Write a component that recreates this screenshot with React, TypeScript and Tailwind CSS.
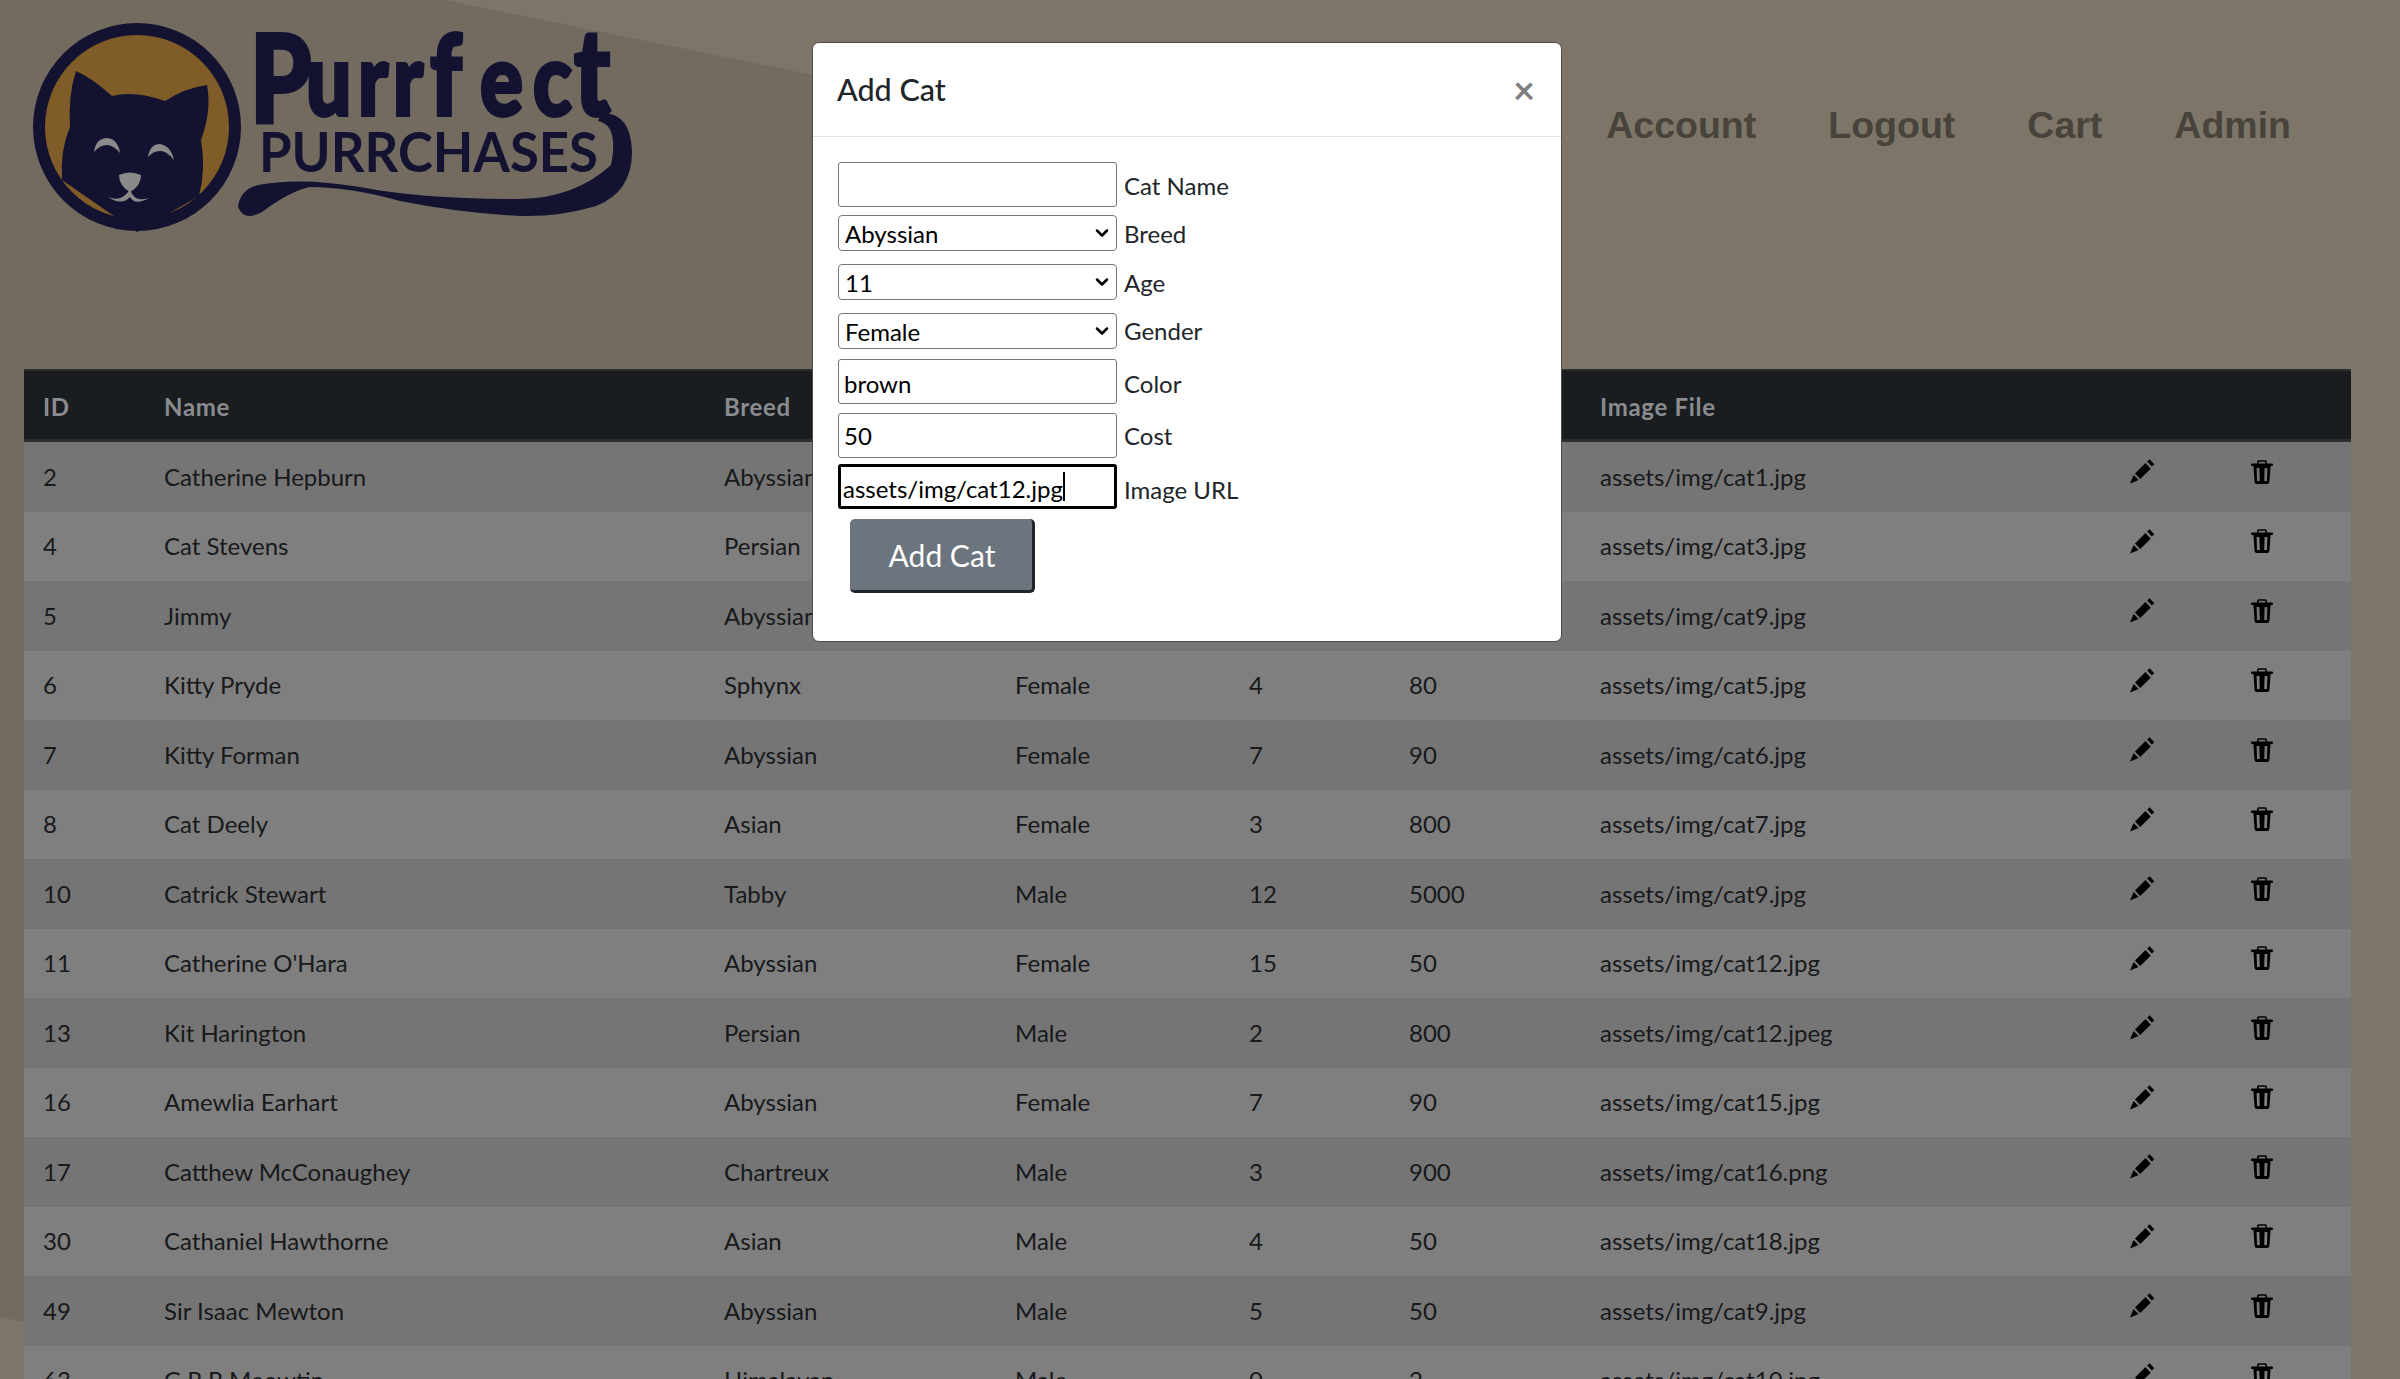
import { ChevronDown } from "lucide-react";

type Cat = {
  id: number;
  name: string;
  breed: string;
  gender: string;
  age: number;
  cost: number;
  image: string;
};

const CATS: Cat[] = [
  { id: 2, name: "Catherine Hepburn", breed: "Abyssian", gender: "Female", age: 5, cost: 50, image: "assets/img/cat1.jpg" },
  { id: 4, name: "Cat Stevens", breed: "Persian", gender: "Male", age: 9, cost: 100, image: "assets/img/cat3.jpg" },
  { id: 5, name: "Jimmy", breed: "Abyssian", gender: "Male", age: 2, cost: 40, image: "assets/img/cat9.jpg" },
  { id: 6, name: "Kitty Pryde", breed: "Sphynx", gender: "Female", age: 4, cost: 80, image: "assets/img/cat5.jpg" },
  { id: 7, name: "Kitty Forman", breed: "Abyssian", gender: "Female", age: 7, cost: 90, image: "assets/img/cat6.jpg" },
  { id: 8, name: "Cat Deely", breed: "Asian", gender: "Female", age: 3, cost: 800, image: "assets/img/cat7.jpg" },
  { id: 10, name: "Catrick Stewart", breed: "Tabby", gender: "Male", age: 12, cost: 5000, image: "assets/img/cat9.jpg" },
  { id: 11, name: "Catherine O'Hara", breed: "Abyssian", gender: "Female", age: 15, cost: 50, image: "assets/img/cat12.jpg" },
  { id: 13, name: "Kit Harington", breed: "Persian", gender: "Male", age: 2, cost: 800, image: "assets/img/cat12.jpeg" },
  { id: 16, name: "Amewlia Earhart", breed: "Abyssian", gender: "Female", age: 7, cost: 90, image: "assets/img/cat15.jpg" },
  { id: 17, name: "Catthew McConaughey", breed: "Chartreux", gender: "Male", age: 3, cost: 900, image: "assets/img/cat16.png" },
  { id: 30, name: "Cathaniel Hawthorne", breed: "Asian", gender: "Male", age: 4, cost: 50, image: "assets/img/cat18.jpg" },
  { id: 49, name: "Sir Isaac Mewton", breed: "Abyssian", gender: "Male", age: 5, cost: 50, image: "assets/img/cat9.jpg" },
  { id: 63, name: "G.R.R Meowtin", breed: "Himalayan", gender: "Male", age: 0, cost: 2, image: "assets/img/cat10.jpg" },
];

function PencilIcon() {
  return (
    <svg width="25" height="25" viewBox="0 -0.5 25 25" className="mt-[-10px]" aria-hidden="true">
      <path d="M0 24 L3.6 15.6 L8.6 20.6 Z" fill="#000" />
      <path d="M5 13.9 L15.5 3.6 L20.7 9.2 L10.2 19.6 Z" fill="#000" />
      <path d="M17.2 2 L19.6 -0.3 L24.3 4.7 L21.8 7 Z" fill="#000" />
    </svg>
  );
}

function TrashIcon({ bg }: { bg: string }) {
  return (
    <svg width="22" height="24" viewBox="0 0 22 24" className="mt-[-10px]" aria-hidden="true">
      <path d="M6.8 4.5 V2 Q6.8 1 7.8 1 H14.2 Q15.2 1 15.2 2 V4.5" fill="none" stroke="#000" strokeWidth="1.6" />
      <rect x="0" y="3.6" width="22" height="2.4" rx="1" fill="#000" />
      <path d="M2.4 5.5 H19.6 L18.4 22 Q18.2 24 16.2 24 H5.8 Q3.8 24 3.6 22 Z" fill="#000" />
      <path d="M7 8 L7.4 21 M15 8 L14.6 21" stroke={bg} strokeWidth="2.8" />
    </svg>
  );
}

function Logo() {
  return (
    <svg width="640" height="240" viewBox="0 0 640 240" aria-label="Purrfect Purrchases" className="shrink-0">
      <circle cx="137" cy="127" r="104" fill="#131230" />
      <circle cx="137" cy="127" r="92" fill="#7f5c28" />
      <path
        d="M76 71 Q92 78 112 96 Q135 90 165 101 Q185 88 207 85 Q212 110 201 140 Q206 170 199 196 L137 232 L62 180 Q60 150 70 127 Q68 95 76 71 Z"
        fill="#131230"
      />
      <path d="M94 152 Q96 138 107 138 Q118 139 120 153 Q113 145 107 145 Q100 145 94 152 Z" fill="#8a8a8a" />
      <path d="M148 157 Q150 144 160 144 Q171 146 174 160 Q167 151 160 151 Q153 151 148 157 Z" fill="#8a8a8a" />
      <path d="M119 175 Q130 170 141 175 Q141 186 130 192 Q119 186 119 175 Z" fill="#8a8a8a" />
      <path d="M108 197 Q122 203 130 189 Q134 203 149 198 Q135 206 130 197 Q122 206 108 197 Z" fill="#8a8a8a" />
      <path
        d="M601 113 Q631 112 632 152 Q632 192 596 206 Q560 217 520 216 Q460 213 400 201 Q350 187 310 187 Q290 191 262 212 Q244 222 238 207 Q240 190 258 185 Q300 177 360 187 Q420 199 520 199 Q575 198 611 165 Q619 125 598 121 Z"
        fill="#131230"
      />
      <text
        transform="translate(0 115) scale(1 1.25)"
        x="250 306 358 393 430 480 533 574"
        fontFamily="Lato, sans-serif"
        fontWeight="900"
        fontSize="80"
        fill="#131230"
        stroke="#131230"
        strokeWidth="3"
      >
        <tspan fontSize="98" dy="6">P</tspan>
        <tspan dy="-6">urr</tspan>
        <tspan fontSize="88">f</tspan>
        <tspan>ec</tspan>
        <tspan fontSize="96">t</tspan>
      </text>
      <text
        x="259"
        y="172"
        fontFamily="Lato, sans-serif"
        fontWeight="700"
        fontSize="55"
        textLength="339"
        lengthAdjust="spacingAndGlyphs"
        fill="#131230"
      >
        PURRCHASES
      </text>
    </svg>
  );
}

const COLS = "grid grid-cols-[121px_560px_291px_234px_160px_191px_530px_121px_109px] items-center pl-[19px]";

function CatRow({ cat, index }: { cat: Cat; index: number }) {
  const odd = index % 2 === 0;
  return (
    <div className={`${COLS} h-[69.5px] text-[24px] text-[#17191b] ${odd ? "bg-[#757575]" : "bg-[#7f7f7f]"}`}>
      <span>{cat.id}</span>
      <span>{cat.name}</span>
      <span>{cat.breed}</span>
      <span>{cat.gender}</span>
      <span>{cat.age}</span>
      <span>{cat.cost}</span>
      <span>{cat.image}</span>
      <PencilIcon />
      <TrashIcon bg={odd ? "#757575" : "#7f7f7f"} />
    </div>
  );
}

const inputClass =
  "w-[279px] h-[45px] border-[1.5px] border-[#767676] rounded-[3px] bg-white px-[5px] text-[24px] text-black";

function SelectBox({ value, options }: { value: string; options: string[] }) {
  return (
    <div className="relative">
      <select
        defaultValue={value}
        className="block appearance-none w-[279px] h-[36.5px] border-[1.5px] border-[#767676] rounded-[4px] bg-white pl-[6px] text-[24px] text-black"
      >
        {options.map((o) => (
          <option key={o}>{o}</option>
        ))}
      </select>
      <ChevronDown className="absolute right-[5px] top-[8px] w-[20px] h-[20px] text-black" strokeWidth={3} aria-hidden="true" />
    </div>
  );
}

function Modal() {
  return (
    <div className="absolute left-[812px] top-[42px] w-[750px] h-[600px] bg-white rounded-[7px] border-[1.5px] border-[#504c46] text-[#212529]">
      <div className="flex items-center justify-between h-[94px] px-[24px] border-b-[1.5px] border-[#dee2e6]">
        <h5 className="text-[30.5px] font-medium">Add Cat</h5>
        <button className="text-[38px] font-bold text-[#7f7f7f] leading-none pr-[2px] mt-[-2px]">×</button>
      </div>
      <div className="pl-[25px] pr-[24px] pt-[24.5px] text-[24px]">
        <div className="flex items-center gap-[7px]">
          <input className={inputClass} defaultValue="" />
          <label className="pt-[4px]">Cat Name</label>
        </div>
        <div className="flex items-center gap-[7px] mt-[8px]">
          <SelectBox value="Abyssian" options={["Abyssian", "Persian"]} />
          <label className="pt-[1px]">Breed</label>
        </div>
        <div className="flex items-center gap-[7px] mt-[12px]">
          <SelectBox value="11" options={["11", "12"]} />
          <label className="pt-[1px]">Age</label>
        </div>
        <div className="flex items-center gap-[7px] mt-[12px]">
          <SelectBox value="Female" options={["Female", "Male"]} />
          <label>Gender</label>
        </div>
        <div className="flex items-center gap-[7px] mt-[9.5px]">
          <input className={`${inputClass} pt-[4px]`} defaultValue="brown" />
          <label className="pt-[6px]">Color</label>
        </div>
        <div className="flex items-center gap-[7px] mt-[9px]">
          <input className={inputClass} defaultValue="50" />
          <label className="pt-[1px]">Cost</label>
        </div>
        <div className="flex items-center gap-[7px] mt-[6.5px]">
          <div className="relative">
            <input className={`${inputClass} border-[3px] border-black pl-[2px] pr-[2px] pt-[3px]`} defaultValue="assets/img/cat12.jpg" />
            <span className="absolute left-[225px] top-[8px] h-[29px] w-[1.5px] bg-black" />
          </div>
          <label className="pt-[6px]">Image URL</label>
        </div>
        <button className="block ml-[12px] mt-[9.5px] w-[185px] h-[74px] rounded-[5px] bg-[#6c757d] border-r-[3px] border-b-[3px] border-[#212529] pt-[2px] pl-[2px] text-[30px] text-white">
          Add Cat
        </button>
      </div>
    </div>
  );
}

export default function App() {
  return (
    <div className="relative h-[1379px] w-full overflow-hidden bg-[#7d7668] font-['Lato',sans-serif]">
      <svg className="absolute inset-0" width="2400" height="1379" aria-hidden="true">
        <polygon points="0,0 445,0 813,75 1000,400 1000,1000 24,1322 0,1317" fill="#736b60" />
      </svg>
      <div className="relative">
        <header className="flex items-start justify-between h-[369px] pr-[109px]">
          <Logo />
          <nav className="flex gap-[72px] pt-[97px] text-[37.5px] font-bold text-[#48433b] font-['Liberation_Sans',sans-serif]">
            <a>Account</a>
            <a>Logout</a>
            <a>Cart</a>
            <a>Admin</a>
          </nav>
        </header>
        <div className="mx-[24px] w-[2327px]">
          <div className={`${COLS} h-[73px] bg-[#1a1d20] border-t-[2px] border-t-[#2b2e31] border-b-[3px] border-b-[#2b2e31] pt-[3px] text-[24px] font-bold tracking-[0.7px] text-[#8a8c8f]`}>
            <span>ID</span>
            <span>Name</span>
            <span>Breed</span>
            <span>Gender</span>
            <span>Age</span>
            <span>Cost</span>
            <span>Image File</span>
          </div>
          {CATS.map((cat, i) => (
            <CatRow key={cat.id} cat={cat} index={i} />
          ))}
        </div>
      </div>
      <Modal />
    </div>
  );
}
